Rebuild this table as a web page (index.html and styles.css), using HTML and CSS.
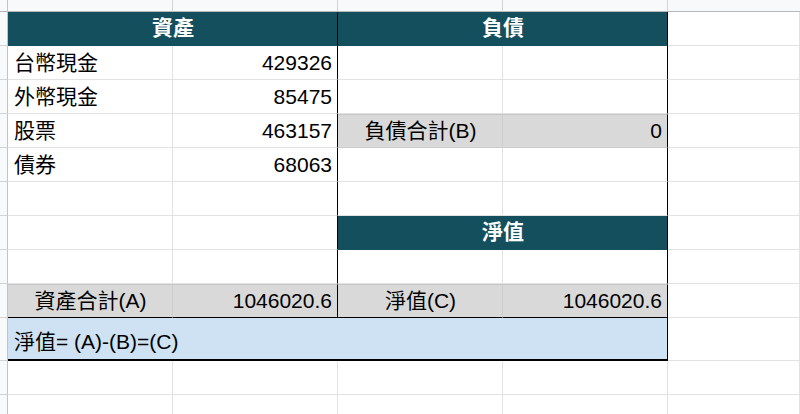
FILE: index.html
```html
<!DOCTYPE html>
<html lang="zh-Hant">
<head>
<meta charset="utf-8">
<title>資產負債表</title>
<link rel="stylesheet" href="styles.css">
</head>
<body>
<div class="sheet">
  <!-- column header strip -->
  <div class="corner"></div>
  <div class="ch"></div><div class="ch"></div><div class="ch"></div><div class="ch"></div><div class="ch ch-last"></div>

  <!-- row 1 -->
  <div class="rh"></div>
  <div class="cell head span2 bR">資產</div>
  <div class="cell head span2 bR">負債</div>
  <div class="cell"></div>

  <!-- row 2 -->
  <div class="rh"></div>
  <div class="cell">台幣現金</div>
  <div class="cell num bR">429326</div>
  <div class="cell"></div>
  <div class="cell bR"></div>
  <div class="cell"></div>

  <!-- row 3 -->
  <div class="rh"></div>
  <div class="cell">外幣現金</div>
  <div class="cell num bR">85475</div>
  <div class="cell"></div>
  <div class="cell bR"></div>
  <div class="cell"></div>

  <!-- row 4 -->
  <div class="rh"></div>
  <div class="cell">股票</div>
  <div class="cell num bR">463157</div>
  <div class="cell grey center">負債合計(B)</div>
  <div class="cell grey num bR">0</div>
  <div class="cell"></div>

  <!-- row 5 -->
  <div class="rh"></div>
  <div class="cell">債券</div>
  <div class="cell num bR">68063</div>
  <div class="cell"></div>
  <div class="cell bR"></div>
  <div class="cell"></div>

  <!-- row 6 -->
  <div class="rh"></div>
  <div class="cell"></div>
  <div class="cell bR"></div>
  <div class="cell"></div>
  <div class="cell bR"></div>
  <div class="cell"></div>

  <!-- row 7 -->
  <div class="rh"></div>
  <div class="cell"></div>
  <div class="cell bR"></div>
  <div class="cell head span2 bR">淨值</div>
  <div class="cell"></div>

  <!-- row 8 -->
  <div class="rh"></div>
  <div class="cell"></div>
  <div class="cell bR"></div>
  <div class="cell"></div>
  <div class="cell bR"></div>
  <div class="cell"></div>

  <!-- row 9 -->
  <div class="rh"></div>
  <div class="cell grey center bB">資產合計(A)</div>
  <div class="cell grey num bR bB">1046020.6</div>
  <div class="cell grey center bB">淨值(C)</div>
  <div class="cell grey num bR bB">1046020.6</div>
  <div class="cell"></div>

  <!-- row 10 -->
  <div class="rh rh-tall"></div>
  <div class="cell blue span4 bR bB">淨值= (A)-(B)=(C)</div>
  <div class="cell"></div>

  <!-- row 11 -->
  <div class="rh"></div>
  <div class="cell"></div><div class="cell"></div><div class="cell"></div><div class="cell"></div><div class="cell"></div>

  <!-- row 12 -->
  <div class="rh"></div>
  <div class="cell"></div><div class="cell"></div><div class="cell"></div><div class="cell"></div><div class="cell"></div>
</div>
</body>
</html>
```

FILE: styles.css
```css
html, body {
  margin: 0;
  padding: 0;
  background: #ffffff;
  overflow: hidden;
}

.sheet {
  display: grid;
  grid-template-columns: 8px 165px 165px 165px 165px 1fr;
  grid-template-rows: 12px repeat(9, 34px) 43px 34px 34px;
  width: 800px;
  font-family: "Liberation Sans", "Noto Sans CJK TC", sans-serif;
  font-size: 21px;
  color: #000;
}

.corner {
  background: #f8f9fa;
  border-right: 1px solid #c4c4c4;
  border-bottom: 1px solid #b8b8b8;
  box-sizing: border-box;
}

.ch {
  background: #f8f9fa;
  border-right: 1px solid #d4d4d4;
  border-bottom: 1px solid #b8b8b8;
  box-sizing: border-box;
}

.ch-last {
  border-right: none;
}

.rh {
  background: #f8f9fa;
  border-right: 1px solid #c4c4c4;
  border-bottom: 1px solid #d4d4d4;
  box-sizing: border-box;
}

.cell {
  box-sizing: border-box;
  border-right: 1px solid #e2e2e2;
  border-bottom: 1px solid #e2e2e2;
  display: flex;
  align-items: flex-end;
  justify-content: flex-start;
  padding: 0 5px 4px 6px;
  line-height: 24px;
  white-space: nowrap;
  overflow: hidden;
}

.num {
  justify-content: flex-end;
}

.center {
  justify-content: center;
}

.span2 {
  grid-column: span 2;
}

.span4 {
  grid-column: span 4;
}

.head {
  background: #134f5c;
  color: #ffffff;
  font-weight: bold;
  justify-content: center;
  border-bottom-color: #134f5c;
  padding-bottom: 5px;
}

.grey {
  background: #d9d9d9;
  border-right-color: #cdcdcd;
  border-bottom-color: #cdcdcd;
  border-top: 1px solid #c6c6c6;
}

.blue {
  background: #cfe2f3;
  padding-bottom: 5px;
}

.bR {
  border-right: 1px solid #000;
}

.bB {
  border-bottom: 1px solid #000;
}

.blue.bB {
  border-bottom: 2px solid #000;
}
```
